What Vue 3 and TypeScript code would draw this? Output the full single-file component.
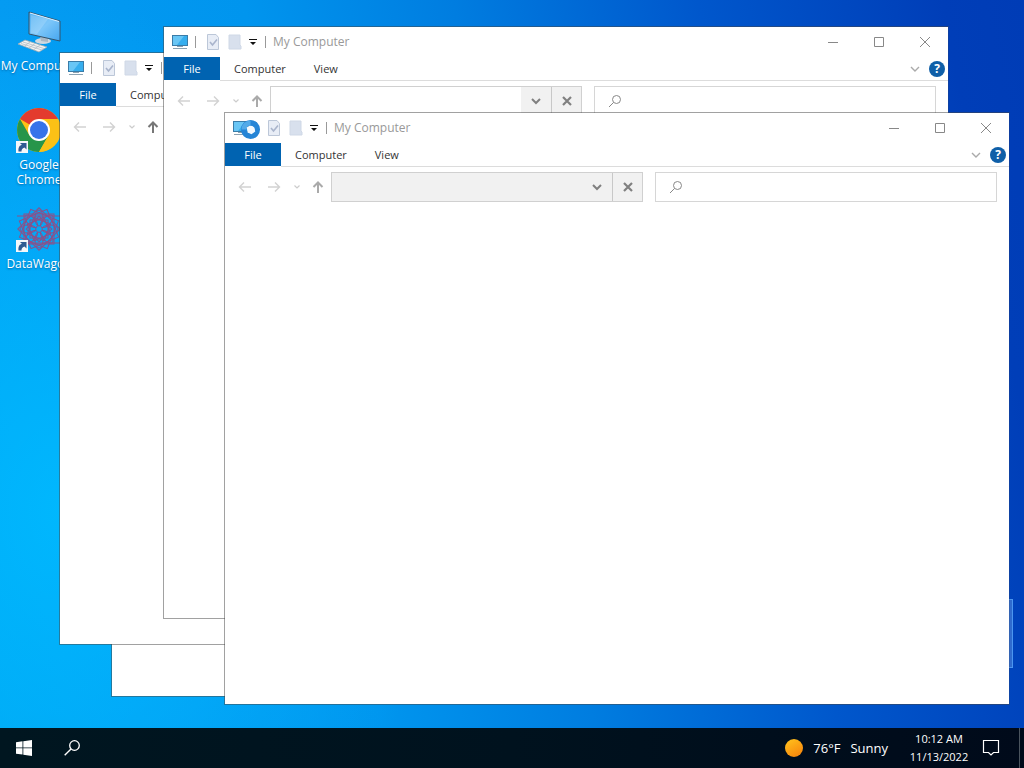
<script setup lang="ts">
import { ref } from 'vue'

interface ExplorerWindow {
  id: number
  x: number
  y: number
  busyAddress: boolean
  dimUp: boolean
}

const title = 'My Computer'
const tabs = ['Computer', 'View']

const windows = ref<ExplorerWindow[]>([
  { id: 1, x: 111, y: 104, busyAddress: false, dimUp: false },
  { id: 2, x: 59, y: 52, busyAddress: false, dimUp: false },
  { id: 3, x: 163, y: 26, busyAddress: false, dimUp: true },
  { id: 4, x: 224, y: 112, busyAddress: true, dimUp: true },
])

const latticeAngles = [0, 22, 45, 67]
const petalAngles = [0, 45, 90, 135, 180, 225, 270, 315]
</script>

<template>
  <div class="screen">
    <main class="desktop">
      <nav class="icons" aria-label="Desktop">
        <a class="shortcut" href="#">
          <svg class="shortcut-icon" viewBox="0 0 44 44" aria-hidden="true">
            <defs>
              <linearGradient id="pcGlass" x1="0" y1="0" x2="1" y2="1">
                <stop offset="0" stop-color="#4fb0f3" />
                <stop offset="0.5" stop-color="#7cc6f9" />
                <stop offset="1" stop-color="#45a6ef" />
              </linearGradient>
            </defs>
            <ellipse cx="26" cy="32" rx="8" ry="3" fill="#cfd8e0" />
            <path d="M23 27l8 2v4l-7-1z" fill="#aab8c4" />
            <path d="M12 3L43 12V32L12 25Z" fill="url(#pcGlass)" stroke="#34536b" />
            <path d="M13 4L42 12.500" fill="none" stroke="#d9efff" />
            <path d="M14 6L31 10L20 25L14 24Z" fill="#fff" opacity=".18" />
            <path d="M1 35L8 31L30 38L22 43Z" fill="#f3f3f1" stroke="#9aa8b3" stroke-width=".8" />
            <path d="M4 34.500L25 41M6 33L27 39.500M7 37.500L13 33M12 39L18 34.500M17 40.500L23 36" stroke="#b4bdc5" stroke-width=".8" />
          </svg>
          <span class="shortcut-label">My Computer</span>
        </a>
        <a class="shortcut" href="#">
          <svg class="shortcut-icon" viewBox="0 0 44 44" aria-hidden="true">
            <circle cx="22" cy="22" r="22" fill="#fbc116" />
            <path d="M22 22L3 11A22 22 0 0 1 41 11H22Z" fill="#e33b2e" />
            <path d="M3 11A22 22 0 0 0 22 44L31.500 27.500L12.500 27.500Z" fill="#27954a" />
            <path d="M22 11H41A22 22 0 0 1 22 44L31.500 27.500Z" fill="#fbc116" />
            <circle cx="22" cy="22" r="11" fill="#fff" />
            <circle cx="22" cy="22" r="9" fill="#3673ea" />
            <rect x="-1" y="33" width="12" height="12" fill="#f4f7fa" />
            <path d="M1.500 43.500C1 39 3 37 5 37L3 35H9.500V41.500L7.500 39.500C5 40 4.500 42 4.500 43.500Z" fill="#2f5b92" />
          </svg>
          <span class="shortcut-label">Google Chrome</span>
        </a>
        <a class="shortcut" href="#">
          <svg class="shortcut-icon" viewBox="0 0 44 44" aria-hidden="true">
            <g fill="none" stroke="#8c5088" stroke-width="1">
              <rect
                v-for="angle in latticeAngles"
                :key="'outer' + angle"
                x="7"
                y="7"
                width="30"
                height="30"
                :transform="`rotate(${angle} 22 22)`"
              />
              <rect
                v-for="angle in latticeAngles"
                :key="'inner' + angle"
                x="13"
                y="13"
                width="18"
                height="18"
                :transform="`rotate(${angle} 22 22)`"
              />
              <ellipse
                v-for="angle in petalAngles"
                :key="'petal' + angle"
                cx="22"
                cy="11"
                rx="4"
                ry="8"
                :transform="`rotate(${angle} 22 22)`"
              />
              <path d="M0 9H44M8 36H44" />
            </g>
            <rect x="-1" y="33" width="12" height="12" fill="#f4f7fa" />
            <path d="M1.500 43.500C1 39 3 37 5 37L3 35H9.500V41.500L7.500 39.500C5 40 4.500 42 4.500 43.500Z" fill="#2f5b92" />
          </svg>
          <span class="shortcut-label">DataWagon</span>
        </a>
      </nav>

      <div class="selection"></div>

      <section
        v-for="win in windows"
        :key="win.id"
        class="window"
        :style="{ left: win.x + 'px', top: win.y + 'px' }"
        :aria-label="title"
      >
        <header class="titlebar">
          <svg class="pc" width="18" height="16" viewBox="0 0 18 16" aria-hidden="true">
            <rect x="1.500" y="1.500" width="15" height="10" fill="#36aeee" stroke="#3a7ca8" />
            <path d="M2 2H13L6 11H2Z" fill="#7fd0f8" opacity=".7" />
            <path d="M6 12.500H12M2 14.500H16" stroke="#8ba2b2" />
          </svg>
          <span class="sep"></span>
          <button class="quick" type="button" aria-label="Properties">
            <svg width="14" height="16" viewBox="0 0 14 16">
              <path d="M1.500 .500H10L12.500 3.500V15.500H1.500Z" fill="#e8edf6" stroke="#bcc7d8" />
              <path d="M4 8L6.500 11L11 5.500" fill="none" stroke="#a9b4cc" stroke-width="1.600" />
            </svg>
          </button>
          <button class="quick" type="button" aria-label="New folder">
            <svg width="14" height="16" viewBox="0 0 14 16">
              <path d="M1 1H12V11L13 12V15H1Z" fill="#d8e0ed" stroke="#cfd8e6" />
            </svg>
          </button>
          <button class="more" type="button" aria-label="Customize toolbar">
            <svg width="8" height="8" viewBox="0 0 8 8">
              <path d="M0 1H8V2H0ZM1 4H7L4 7Z" fill="#111" />
            </svg>
          </button>
          <span class="sep"></span>
          <h1 class="title">{{ title }}</h1>
          <button class="control" type="button" aria-label="Minimize">
            <svg width="12" height="12" viewBox="0 0 12 12"><path d="M1 6.500H11" stroke="#888" /></svg>
          </button>
          <button class="control" type="button" aria-label="Maximize">
            <svg width="12" height="12" viewBox="0 0 12 12"><path d="M1.500 1.500H10.500V10.500H1.500Z" fill="none" stroke="#888" /></svg>
          </button>
          <button class="control" type="button" aria-label="Close">
            <svg width="12" height="12" viewBox="0 0 12 12"><path d="M1 1L11 11M11 1L1 11" stroke="#888" /></svg>
          </button>
        </header>

        <div class="ribbon">
          <button class="file" type="button">File</button>
          <div class="tabs">
            <button v-for="tab in tabs" :key="tab" class="tab" type="button">{{ tab }}</button>
            <button class="expand" type="button" aria-label="Expand the ribbon">
              <svg width="10" height="6" viewBox="0 0 10 6"><path d="M1 1L5 5L9 1" fill="none" stroke="#aaa" stroke-width="1.400" /></svg>
            </button>
            <button class="help" type="button" aria-label="Help">?</button>
          </div>
        </div>

        <div class="navbar">
          <button class="back" type="button" aria-label="Back">
            <svg width="14" height="12" viewBox="0 0 14 12"><path d="M13 6H1.500M6 1.500L1.500 6L6 10.500" fill="none" stroke="#d2d2d2" stroke-width="1.400" /></svg>
          </button>
          <button class="forward" type="button" aria-label="Forward">
            <svg width="14" height="12" viewBox="0 0 14 12"><path d="M1 6H12.500M8 1.500L12.500 6L8 10.500" fill="none" stroke="#d2d2d2" stroke-width="1.400" /></svg>
          </button>
          <button class="recent" type="button" aria-label="Recent locations">
            <svg width="6" height="4" viewBox="0 0 6 4"><path d="M.500 .500L3 3L5.500 .500" fill="none" stroke="#ccc" stroke-width="1.200" /></svg>
          </button>
          <button class="up" :class="{ dim: win.dimUp }" type="button" aria-label="Up">
            <svg width="12" height="14" viewBox="0 0 12 14"><path d="M6 13V2.500M1.500 7L6 2.500L10.500 7" fill="none" stroke="currentColor" stroke-width="2" /></svg>
          </button>
          <div class="address" :class="{ busy: win.busyAddress }">
            <input class="path" type="text" aria-label="Address" />
            <button class="drop" type="button" aria-label="Previous locations">
              <svg width="10" height="7" viewBox="0 0 10 7"><path d="M1 1L5 5L9 1" fill="none" stroke="#808080" stroke-width="2" /></svg>
            </button>
            <button class="stop" type="button" aria-label="Stop">
              <svg width="10" height="10" viewBox="0 0 10 10"><path d="M1 1L9 9M9 1L1 9" stroke="#808080" stroke-width="2.200" /></svg>
            </button>
          </div>
          <label class="search">
            <svg width="14" height="14" viewBox="0 0 14 14" aria-hidden="true">
              <circle cx="8.500" cy="5.500" r="4" fill="none" stroke="#888" />
              <path d="M5.500 8.500L1 13" stroke="#888" />
            </svg>
            <input type="text" aria-label="Search" />
          </label>
        </div>
      </section>

      <svg class="cursor" viewBox="0 0 22 22" aria-hidden="true">
        <circle cx="11" cy="11" r="7" fill="none" stroke="#2585d6" stroke-width="6" />
        <path d="M4 11A7 7 0 0 1 11 4" fill="none" stroke="#52aae8" stroke-width="5" />
        <path d="M7 9L10 7L15 9L16 13L12 16L8 14Z" fill="#f2f9fe" />
      </svg>
    </main>

    <footer class="taskbar">
      <button class="task" type="button" aria-label="Start">
        <svg width="16" height="16" viewBox="0 0 16 16">
          <path d="M0 2.200L6.500 1.300V7.500H0ZM7.300 1.200L16 0V7.500H7.300ZM0 8.300H6.500V14.600L0 13.700ZM7.300 8.300H16V16L7.300 14.800Z" fill="#fff" />
        </svg>
      </button>
      <button class="task" type="button" aria-label="Search">
        <svg width="16" height="16" viewBox="0 0 16 16">
          <circle cx="10.500" cy="5.500" r="4.800" fill="none" stroke="#fff" stroke-width="1.300" />
          <path d="M7 9L.700 15.300" stroke="#fff" stroke-width="1.400" />
        </svg>
      </button>
      <button class="weather" type="button">
        <svg width="18" height="18" viewBox="0 0 18 18" aria-hidden="true">
          <defs>
            <linearGradient id="sun" x1="0.200" y1="0" x2="0.800" y2="1">
              <stop offset="0" stop-color="#ffbf1c" />
              <stop offset="1" stop-color="#f7840c" />
            </linearGradient>
          </defs>
          <circle cx="9" cy="9" r="9" fill="url(#sun)" />
        </svg>
        <span>76°F</span>
        <span>Sunny</span>
      </button>
      <button class="clock" type="button">
        <span>10:12 AM</span>
        <span>11/13/2022</span>
      </button>
      <button class="notes" type="button" aria-label="Notifications">
        <svg width="18" height="18" viewBox="0 0 18 18">
          <path d="M1.500 1.500H16.500V13.500H11.500L9 16L6.500 13.500H1.500Z" fill="none" stroke="#fff" stroke-width="1.200" />
        </svg>
      </button>
      <button class="peek" type="button" aria-label="Show desktop"></button>
    </footer>
  </div>
</template>

<style>
body {
  margin: 0;
  overflow: hidden;
}
</style>

<style scoped>
.screen {
  display: flex;
  flex-direction: column;
  height: 100vh;
  overflow: hidden;
  font-family: "Open Sans", "Noto Sans", sans-serif;
  font-size: 11px;
  color: #333;
}

button,
input {
  margin: 0;
  padding: 0;
  border: 0;
  background: none;
  font: inherit;
  color: inherit;
}

button {
  display: flex;
  align-items: center;
  justify-content: center;
}

svg {
  display: block;
  flex: none;
}

.desktop {
  position: relative;
  flex: 1;
  overflow: hidden;
  background:
    radial-gradient(ellipse 36% 70% at 6% 70%, rgba(0, 186, 255, 0.9), rgba(0, 180, 250, 0)),
    linear-gradient(79deg, #00a2f0 0%, #049bf2 12%, #0095ee 33%, #007de0 51%, #0057cc 72%, #003eb8 93%, #003cb6 100%);
}

.icons {
  display: grid;
  grid-auto-rows: 99px;
  width: 78px;
  padding-top: 9px;
}

.shortcut {
  display: flex;
  flex-direction: column;
  align-items: center;
  gap: 5px;
  color: #fff;
  text-decoration: none;
}

.shortcut-icon {
  width: 44px;
  height: 44px;
  overflow: visible;
}

.shortcut-label {
  font-size: 12px;
  line-height: 15px;
  text-align: center;
  text-shadow: 0 1px 2px rgba(0, 40, 90, 0.5);
}

.selection {
  position: absolute;
  left: 938px;
  top: 599px;
  width: 73px;
  height: 67px;
  border: 1px solid #4b96f0;
  background: #2f6bce;
}

.window {
  position: absolute;
  width: 784px;
  height: 591px;
  border: 1px solid rgba(70, 70, 70, 0.5);
  border-right-color: rgba(70, 70, 70, 0.2);
  background: #fff;
  background-clip: padding-box;
}

.titlebar {
  display: flex;
  align-items: center;
  height: 30px;
  padding-left: 7px;
}

.sep {
  width: 1px;
  height: 12px;
  background: #999;
}

.pc {
  margin-right: 6px;
}

.quick {
  width: 22px;
  height: 22px;
}

.titlebar .sep + .quick {
  margin-left: 6px;
}

.more {
  width: 14px;
  height: 22px;
  margin-right: 5px;
}

.title {
  flex: 1;
  margin: 0;
  padding-left: 7px;
  font-size: 12px;
  font-weight: 400;
  line-height: 16px;
  color: #999;
}

.control {
  width: 46px;
  height: 30px;
}

.ribbon {
  display: flex;
  height: 24px;
}

.file {
  width: 56px;
  height: 23px;
  background: #0063b1;
  color: #fff;
}

.tabs {
  display: flex;
  flex: 1;
  align-items: center;
  padding-right: 3px;
  border-bottom: 1px solid #dcdcdc;
}

.tab {
  padding: 0 14px;
}

.expand {
  width: 20px;
  height: 20px;
  margin-left: auto;
  margin-right: 4px;
}

.help {
  width: 16px;
  height: 16px;
  border-radius: 50%;
  background: #0f5fa8;
  color: #fff;
  font-size: 12px;
  font-weight: 700;
  line-height: 16px;
}

.navbar {
  display: flex;
  align-items: center;
  padding: 5px 12px 5px 5px;
}

.back {
  width: 30px;
}

.forward {
  width: 28px;
}

.recent {
  width: 18px;
}

.up {
  width: 24px;
  margin-right: 1px;
  color: #777;
}

.up.dim {
  color: #aaa;
}

.address {
  display: flex;
  flex: 312 1 0;
  box-sizing: border-box;
  height: 30px;
  border: 1px solid #d0d0d0;
}

.path {
  flex: 1;
  min-width: 0;
}

.drop {
  width: 30px;
  background: #f1f1f1;
}

.stop {
  width: 30px;
  border-left: 1px solid #c8c8c8;
  background: #f1f1f1;
}

.busy {
  background: #f1f1f1;
}

.search {
  display: flex;
  flex: 342 1 0;
  align-items: center;
  box-sizing: border-box;
  height: 30px;
  margin-left: 12px;
  border: 1px solid #d6d6d6;
}

.search svg {
  margin: 0 8px 0 13px;
}

.search input {
  flex: 1;
  min-width: 0;
}

.cursor {
  position: absolute;
  left: 240px;
  top: 119px;
  width: 21px;
  height: 21px;
}

.taskbar {
  display: flex;
  flex: none;
  align-items: stretch;
  height: 40px;
  background: linear-gradient(90deg, #001620, #00121e 50%, #000a1a);
  color: #fff;
}

.task {
  width: 48px;
}

.weather {
  gap: 10px;
  margin-left: auto;
  font-size: 13px;
}

.clock {
  flex-direction: column;
  width: 74px;
  margin-left: 14px;
  font-size: 11px;
  line-height: 18px;
}

.notes {
  width: 30px;
  margin-right: 13px;
}

.peek {
  width: 5px;
  border-left: 1px solid #4a545e;
}
</style>
